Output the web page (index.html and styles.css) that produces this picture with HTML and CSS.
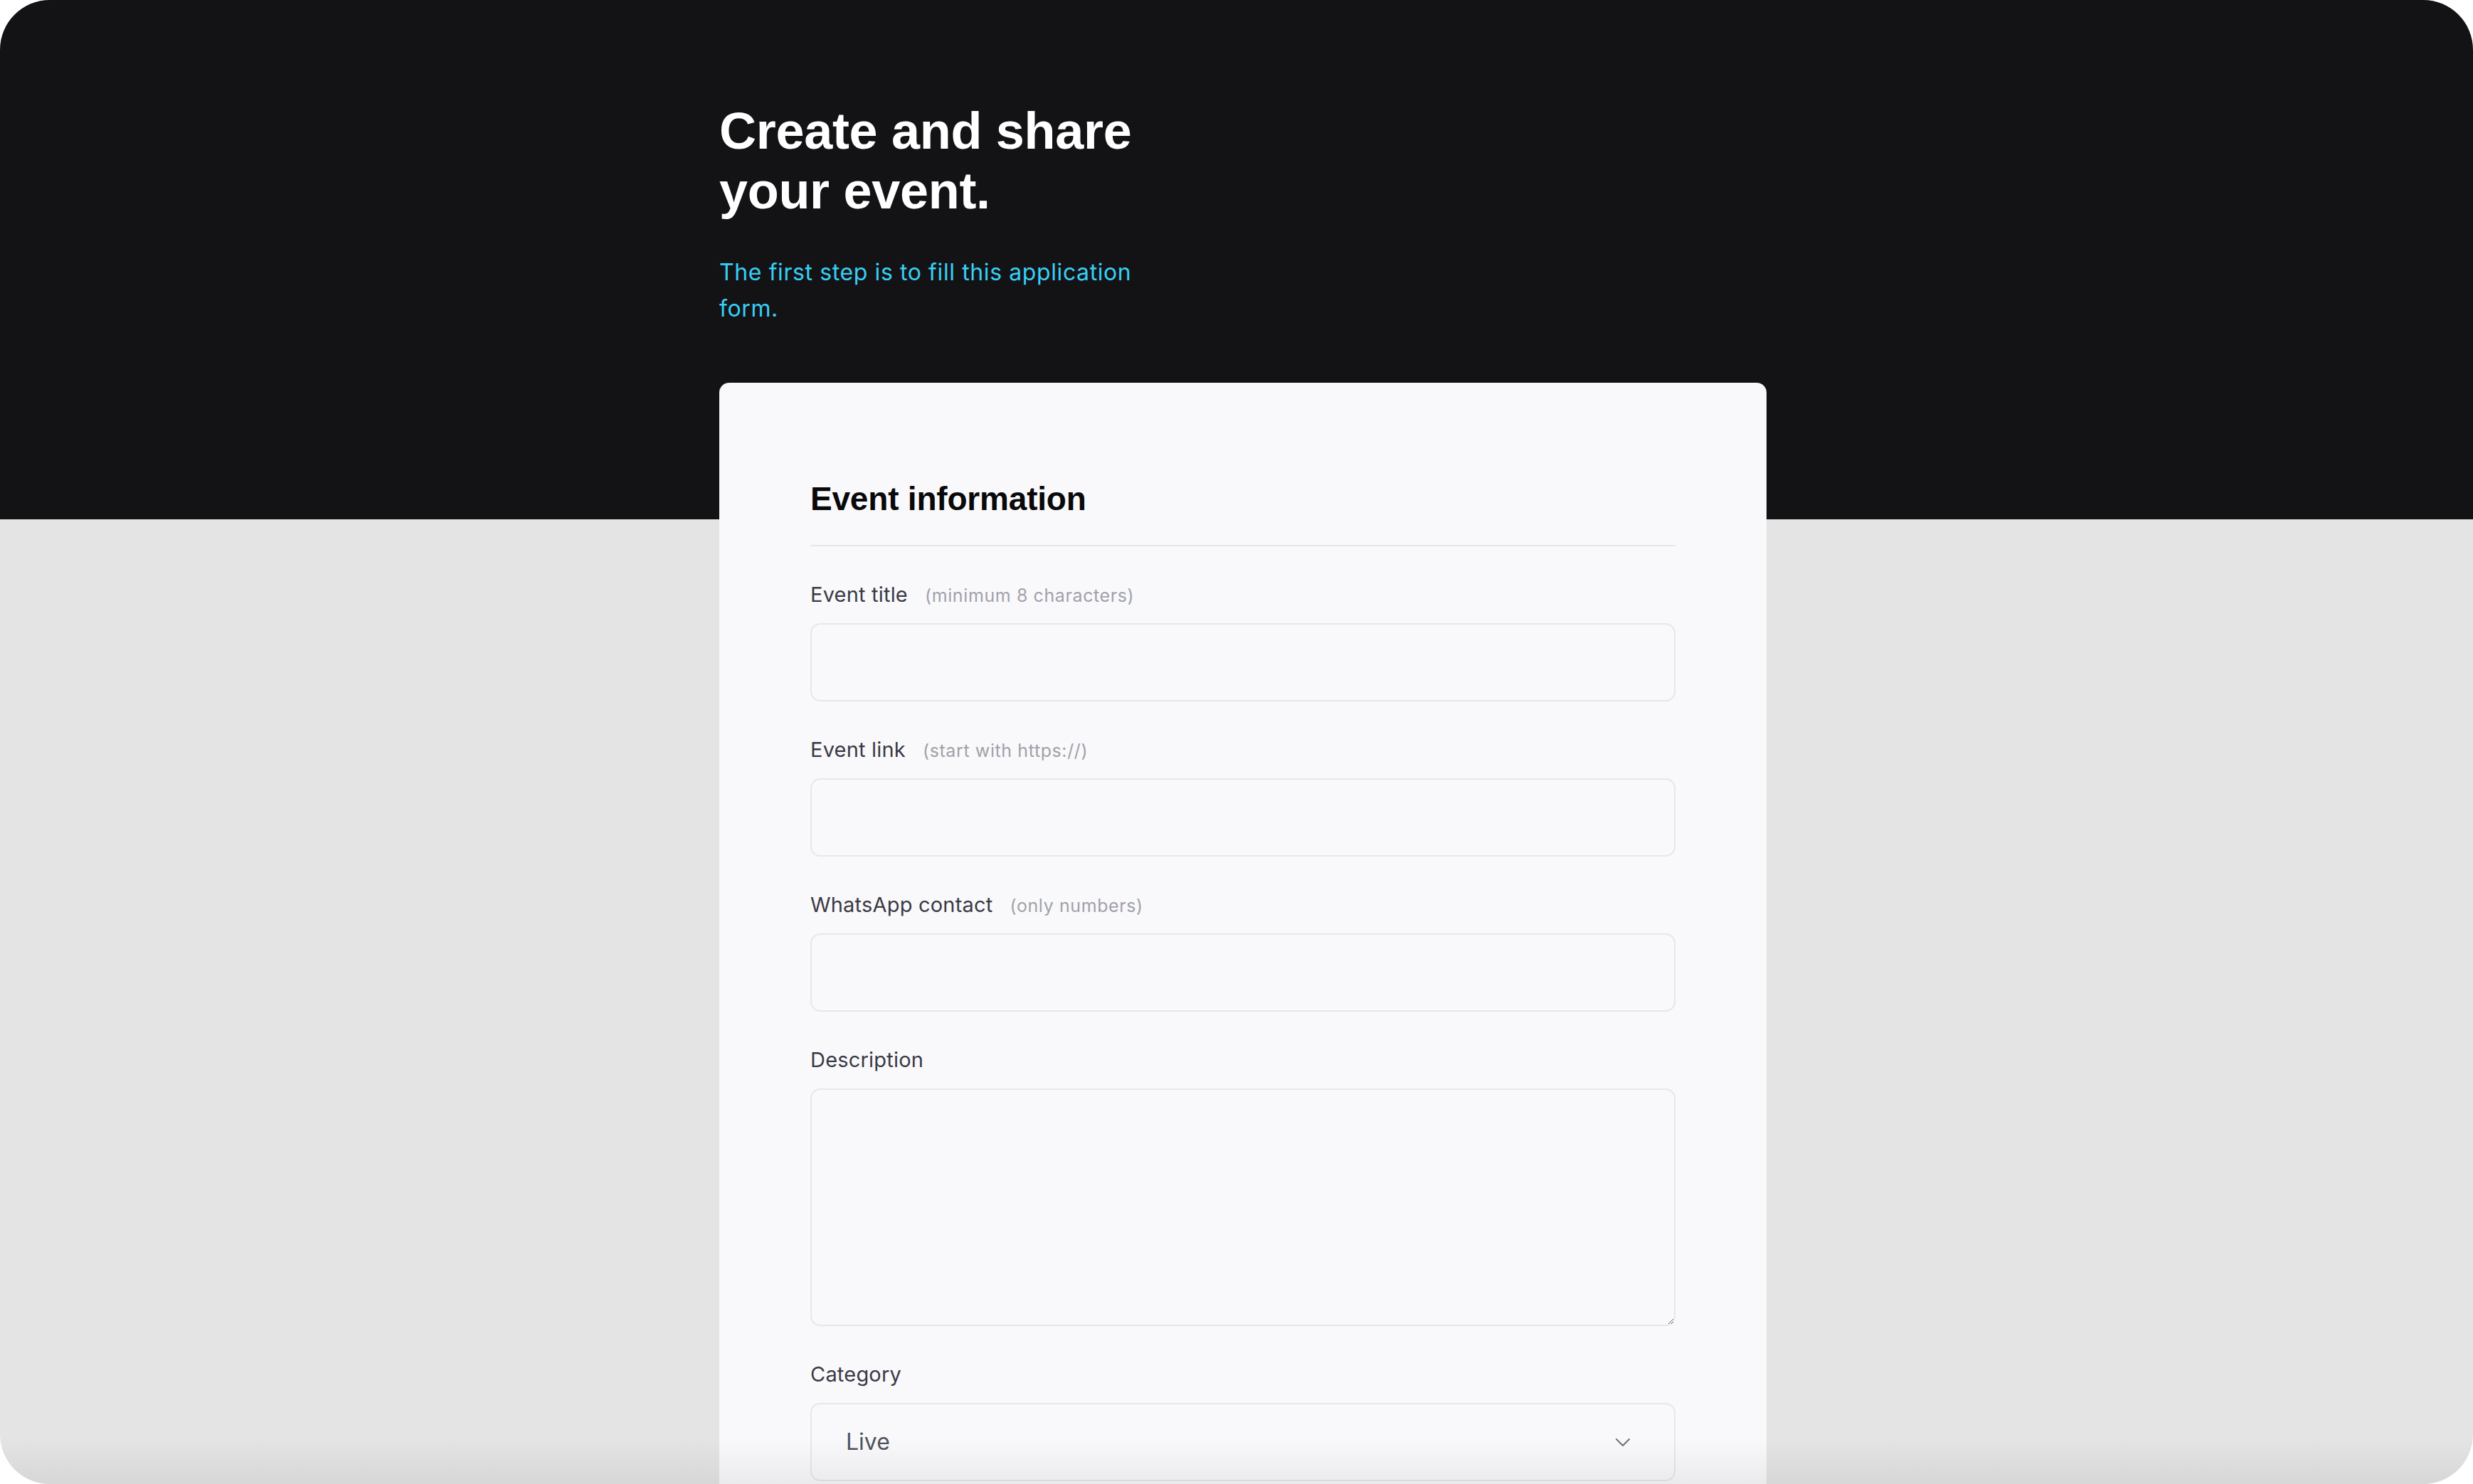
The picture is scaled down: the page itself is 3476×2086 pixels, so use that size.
FILE: index.html
```html
<!DOCTYPE html>
<html lang="en">
<head>
<meta charset="utf-8">
<title>Create and share your event</title>
<link rel="stylesheet" href="styles.css">
</head>
<body>
<div class="frame">
  <div class="column">
    <header class="hero">
      <h1 class="hero-title">Create and share your event.</h1>
      <p class="hero-sub">The first step is to fill this application form.</p>
    </header>
    <form class="card">
      <h2 class="card-title">Event information</h2>
      <div class="fields">
        <div class="field">
          <label class="field-label" for="title">Event title<span class="hint">(minimum 8 characters)</span></label>
          <input class="control" id="title" type="text">
        </div>
        <div class="field">
          <label class="field-label" for="link">Event link<span class="hint">(start with https://)</span></label>
          <input class="control" id="link" type="text">
        </div>
        <div class="field">
          <label class="field-label" for="phone">WhatsApp contact<span class="hint">(only numbers)</span></label>
          <input class="control" id="phone" type="text">
        </div>
        <div class="field">
          <label class="field-label" for="desc">Description</label>
          <textarea class="control control-area" id="desc"></textarea>
        </div>
        <div class="field">
          <label class="field-label">Category</label>
          <div class="control control-select">
            <span class="select-value">Live</span>
            <svg class="chevron" width="22" height="13" viewBox="0 0 22 13"><path d="M2 2 L11 11 L20 2" fill="none" stroke="#71717a" stroke-width="2" stroke-linecap="round" stroke-linejoin="round"/></svg>
          </div>
        </div>
      </div>
    </form>
  </div>
  <div class="fade"></div>
</div>
</body>
</html>
```

FILE: styles.css
```css
html, body {
  margin: 0;
  padding: 0;
  background: #ffffff;
}

.frame {
  position: relative;
  box-sizing: border-box;
  width: 3476px;
  height: 2086px;
  overflow: hidden;
  border-radius: 70px;
  padding-left: 18px;
  background: linear-gradient(to bottom, #131316 0, #131316 730px, #e4e4e4 730px, #e4e4e4 100%);
}

.column {
  width: 1472px;
  margin: 0 auto;
}

.hero {
  padding-top: 142px;
  max-width: 610px;
}

.hero-title {
  margin: 0;
  font-family: "Liberation Sans", Arial, sans-serif;
  font-weight: 700;
  font-size: 72px;
  line-height: 84px;
  letter-spacing: -0.3px;
  color: #ffffff;
}

.hero-sub {
  margin: 47px 0 0;
  font-family: Inter, "Noto Sans", sans-serif;
  font-weight: 400;
  font-size: 32px;
  line-height: 51px;
  letter-spacing: 0.6px;
  color: #38cff5;
}

.card {
  margin-top: 79px;
  box-sizing: border-box;
  background: #f9f9fb;
  border-radius: 14px 14px 0 0;
  padding: 135px 128px 200px;
}

.card-title {
  margin: 0;
  padding-bottom: 37px;
  border-bottom: 2px solid #e6e6ee;
  font-family: "Liberation Sans", Arial, sans-serif;
  font-weight: 700;
  font-size: 46px;
  line-height: 56px;
  letter-spacing: -0.2px;
  color: #09090b;
}

.fields {
  display: flex;
  flex-direction: column;
  gap: 48px;
  padding-top: 48px;
}

.field {
  display: flex;
  flex-direction: column;
  gap: 20px;
}

.field-label {
  display: block;
  height: 40px;
  font-family: Inter, "Noto Sans", sans-serif;
  font-weight: 400;
  font-size: 29px;
  line-height: 40px;
  letter-spacing: 0.2px;
  color: #3a3a45;
}

.hint {
  margin-left: 24px;
  font-weight: 400;
  font-size: 25px;
  line-height: 1;
  letter-spacing: 0.6px;
  color: #a1a1aa;
}

.control {
  box-sizing: border-box;
  display: block;
  width: 100%;
  height: 110px;
  margin: 0;
  padding: 0 48px;
  border: 2px solid #e6e6ee;
  border-radius: 14px;
  background: #f9f9fb;
  font-family: Inter, "Noto Sans", sans-serif;
  font-size: 32px;
  color: #52525b;
  outline: none;
}

.control-area {
  height: 334px;
  padding: 24px 48px;
  resize: vertical;
}

.control-select {
  display: flex;
  align-items: center;
  justify-content: space-between;
  padding: 0 61px 0 48px;
}

.select-value {
  font-size: 32px;
  line-height: 40px;
  color: #52525b;
}

.chevron {
  display: block;
}

.fade {
  position: absolute;
  left: 0;
  right: 0;
  bottom: 0;
  height: 64px;
  background: linear-gradient(to bottom, rgba(0, 0, 0, 0), rgba(0, 0, 0, 0.06));
  pointer-events: none;
}
```
